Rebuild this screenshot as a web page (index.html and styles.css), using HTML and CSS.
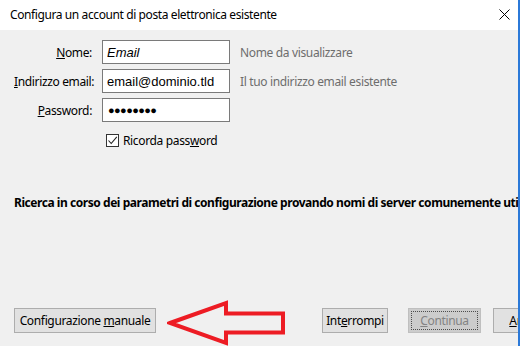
FILE: index.html
```html
<!DOCTYPE html>
<html lang="it">
<head>
    <meta charset="UTF-8">
    <meta name="viewport" content="width=device-width, initial-scale=1.0">
    <title>Configura un account di posta elettronica esistente</title>
    <link rel="stylesheet" href="styles.css">
</head>
<body>
    <div class="window">
        <div class="title-bar">
            <span class="title">Configura un account di posta elettronica esistente</span>
            <svg class="close" width="11" height="11" viewBox="0 0 11 11">
                <path d="M0.5 0.5 L10.5 10.5 M10.5 0.5 L0.5 10.5" stroke="#000" stroke-width="1" fill="none"/>
            </svg>
        </div>

        <div class="content">
            <form class="account-form">
                <label for="nome"><u>N</u>ome:</label>
                <input type="text" id="nome" class="italic" value="Email">
                <span class="hint">Nome da visualizzare</span>

                <label for="email"><u>I</u>ndirizzo email:</label>
                <input type="text" id="email" value="email@dominio.tld">
                <span class="hint">Il tuo indirizzo email esistente</span>

                <label for="password"><u>P</u>assword:</label>
                <input type="text" id="password" class="dots" value="&#9679;&#9679;&#9679;&#9679;&#9679;&#9679;&#9679;&#9679;">
                <span></span>

                <span></span>
                <div class="remember">
                    <span class="checkbox">
                        <svg width="11" height="11" viewBox="0 0 11 11">
                            <path d="M1.5 5.5 L4.2 8.5 L9.8 1.8" stroke="#222" stroke-width="1.1" fill="none"/>
                        </svg>
                    </span>
                    <span>Ricorda pass<u>w</u>ord</span>
                </div>
                <span></span>
            </form>

            <p class="status">Ricerca in corso dei parametri di configurazione provando nomi di server comunemente utilizzati&hellip;</p>

            <div class="buttons">
                <button type="button" class="btn btn-manual">Configurazione <u>m</u>anuale</button>
                <div class="btn-group">
                    <button type="button" class="btn btn-stop">Int<u>e</u>rrompi</button>
                    <button type="button" class="btn btn-disabled"><span class="focus"><u>C</u>ontinua</span></button>
                    <button type="button" class="btn btn-cancel"><u>A</u>nnulla</button>
                </div>
            </div>
        </div>

        <!-- red annotation arrow pointing at the manual config button -->
        <svg class="arrow" width="124" height="46" viewBox="0 0 124 46">
            <path d="M3 23 L59 3 L59 13.5 L116 13.5 L116 32.5 L59 32.5 L59 43 Z" fill="none" stroke="#ed1c24" stroke-width="4" stroke-linejoin="miter"/>
        </svg>
    </div>
</body>
</html>
```

FILE: styles.css
```css
* {
    margin: 0;
    padding: 0;
    box-sizing: border-box;
}

body {
    font-family: "Noto Sans", "Open Sans", sans-serif;
    font-size: 12px;
    color: #000;
    width: 520px;
    height: 346px;
    overflow: hidden;
}

.window {
    position: relative;
    width: 520px;
    height: 346px;
    background-color: #f0f0f0;
    border-right: 2px solid #2b79d8;
    overflow: hidden;
    display: flex;
    flex-direction: column;
}

.title-bar {
    height: 30px;
    background-color: #fff;
    display: flex;
    align-items: center;
    justify-content: space-between;
    padding: 0 8px 0 10px;
    flex-shrink: 0;
}

.title {
    font-size: 12px;
    letter-spacing: -0.4px;
    margin-top: -1px;
}

.close {
    margin-top: -1px;
}

.content {
    flex: 1;
    display: flex;
    flex-direction: column;
    padding: 10px 0 0 14px;
}

.account-form {
    display: grid;
    grid-template-columns: 78px 128px 1fr;
    column-gap: 10px;
    row-gap: 5px;
    align-items: center;
}

.account-form label {
    text-align: right;
    letter-spacing: -0.35px;
    white-space: nowrap;
}

.account-form input {
    height: 24px;
    border: 1px solid #7a7a7a;
    background-color: #fff;
    padding: 0 4px;
    font-family: "Liberation Sans", Arial, sans-serif;
    font-size: 13px;
    color: #000;
    outline: none;
}

.account-form input.italic {
    font-style: italic;
}

.account-form input.dots {
    font-size: 11px;
    letter-spacing: -0.6px;
    padding-left: 5px;
}

.hint {
    color: #6d6d6d;
    letter-spacing: -0.35px;
}

.remember {
    display: flex;
    align-items: center;
    gap: 4px;
    margin-top: 5px;
    padding-left: 4px;
    letter-spacing: -0.35px;
}

.checkbox {
    width: 13px;
    height: 13px;
    border: 1px solid #333;
    background-color: #fff;
    display: flex;
    align-items: center;
    justify-content: center;
}

.status {
    margin-top: 45px;
    font-weight: bold;
    white-space: nowrap;
    letter-spacing: -0.45px;
}

.buttons {
    margin-top: auto;
    margin-bottom: 13px;
    display: flex;
    align-items: center;
}

.btn-group {
    display: flex;
    margin-left: 166px;
}

.btn {
    height: 25px;
    font-family: inherit;
    font-size: 12px;
    letter-spacing: -0.35px;
    background-color: #e1e1e1;
    border: 1px solid #adadad;
    color: #000;
    white-space: nowrap;
    flex-shrink: 0;
}

.btn-manual {
    width: 142px;
}

.btn-stop {
    width: 66px;
}

.btn-disabled {
    width: 73px;
    margin-left: 20px;
    background-color: #cccccc;
    border-color: #bfbfbf;
    color: #838383;
    padding: 2px;
}

.btn-disabled .focus {
    display: flex;
    align-items: center;
    justify-content: center;
    height: 100%;
    border: 1px dotted #4d4d4d;
}

.btn-cancel {
    width: 73px;
    margin-left: 12px;
}

.arrow {
    position: absolute;
    left: 167px;
    top: 300px;
}
```
